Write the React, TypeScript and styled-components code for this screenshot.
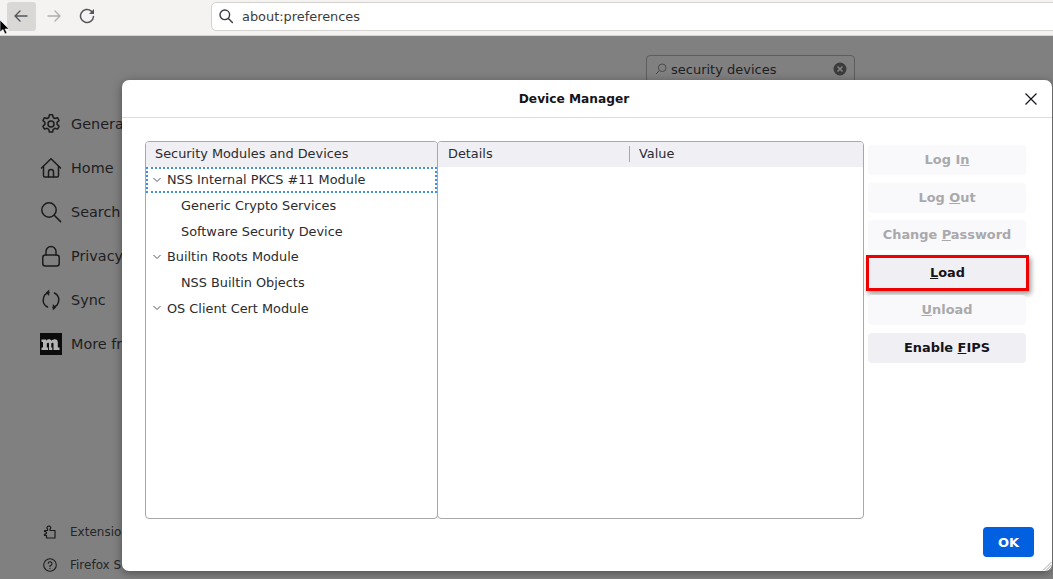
import styled, { createGlobalStyle } from 'styled-components';

const GlobalStyle = createGlobalStyle`
  html, body {
    margin: 0;
    padding: 0;
    width: 100%;
    height: 100%;
    overflow: hidden;
    background: #808080;
    font-family: 'DejaVu Sans', sans-serif;
  }
  #root {
    height: 100%;
  }
  svg {
    flex: 0 0 auto;
  }
`;

const Page = styled.div`
  position: relative;
  display: flex;
  flex-direction: column;
  width: 1053px;
  height: 579px;
  overflow: hidden;
`;

const Toolbar = styled.div`
  display: flex;
  align-items: center;
  flex: 0 0 36px;
  box-sizing: border-box;
  padding: 0 0 3px 7px;
  background: #f4f3f1;
  border-bottom: 1px solid #d4d2ce;
`;

const NavButton = styled.div<{ $hover?: boolean; $disabled?: boolean }>`
  display: flex;
  align-items: center;
  justify-content: center;
  width: 29px;
  height: 29px;
  margin-right: 4px;
  padding-right: 1px;
  box-sizing: border-box;
  border-radius: 3px;
  background: ${(p) => (p.$hover ? '#d9d8d6' : 'transparent')};
  color: ${(p) => (p.$disabled ? '#b0afad' : '#55555a')};
`;

const UrlBar = styled.div`
  display: flex;
  align-items: center;
  flex: 1;
  height: 29px;
  box-sizing: border-box;
  margin-left: 105px;
  margin-right: -8px;
  padding-left: 6px;
  background: #fff;
  border: 1px solid #d5d3cf;
  border-radius: 5px;
  color: #3c3c40;
  font-size: 12.9px;
`;

const UrlText = styled.span`
  margin-left: 8px;
`;

const Content = styled.div`
  position: relative;
  flex: 1;
  display: flex;
  background: #808080;
`;

const Sidebar = styled.nav`
  display: flex;
  flex-direction: column;
  width: 122px;
  flex: 0 0 122px;
  padding: 66px 0 0 40px;
  box-sizing: border-box;
  overflow: hidden;
  white-space: nowrap;
`;

const NavItem = styled.div`
  display: flex;
  align-items: center;
  gap: 9px;
  height: 44px;
  color: #1e1e20;
  font-size: 14.4px;
`;

const SideFooter = styled.div`
  margin-top: auto;
  margin-bottom: -2px;
`;

const FooterItem = styled.div`
  display: flex;
  align-items: center;
  gap: 13px;
  height: 33px;
  margin-left: 3px;
  color: #262628;
  font-size: 12px;
`;

const SearchArea = styled.div`
  flex: 1;
  display: flex;
  justify-content: flex-end;
  align-items: flex-start;
  padding: 19px 198px 0 0;
`;

const SearchBox = styled.div`
  display: flex;
  align-items: center;
  width: 209px;
  height: 28px;
  box-sizing: border-box;
  padding: 0 7px 0 8px;
  gap: 4px;
  border: 1px solid #5e5e5e;
  border-radius: 4px;
  color: #1e1e20;
  font-size: 13px;
`;

const SearchValue = styled.span`
  flex: 1;
`;

const Dialog = styled.div`
  position: absolute;
  left: 122px;
  top: 44px;
  width: 930px;
  height: 491px;
  display: flex;
  flex-direction: column;
  background: #fff;
  border-radius: 7px;
  box-shadow: 0 2px 10px rgba(0, 0, 0, 0.4);
`;

const DialogHeader = styled.div`
  display: flex;
  align-items: center;
  flex: 0 0 38px;
  box-sizing: border-box;
  padding: 0 14px 0 0;
  border-bottom: 1px solid #dcdcdc;
`;

const DialogTitle = styled.div`
  flex: 1;
  padding-left: 2px;
  text-align: center;
  color: #15141a;
  font-size: 12.2px;
  font-weight: 700;
`;

const CloseIcon = styled.div`
  display: flex;
  color: #15141a;
`;

const DialogBody = styled.div`
  flex: 1;
  display: flex;
  padding: 23px 26px 0 23px;
`;

const TreePanel = styled.div`
  width: 293px;
  height: 378px;
  box-sizing: border-box;
  border: 1px solid #a8a8ac;
  border-radius: 4px;
  overflow: hidden;
  color: #2b2b2f;
  font-size: 12.87px;
`;

const DetailsPanel = styled(TreePanel)`
  width: 427px;
  margin-left: -1px;
`;

const ColumnHeader = styled.div`
  display: flex;
  align-items: center;
  height: 25px;
  padding-bottom: 1px;
  box-sizing: border-box;
  background: #f0f0f4;
`;

const HeaderCell = styled.div<{ $width?: number }>`
  width: ${(p) => (p.$width ? `${p.$width}px` : 'auto')};
  flex: ${(p) => (p.$width ? '0 0 auto' : '1')};
  box-sizing: border-box;
  padding-left: ${(p) => (p.$width ? 10 : 9)}px;
  line-height: 16px;
  border-right: ${(p) => (p.$width ? '1px solid #a8a8ac' : 'none')};
`;

const TreeRow = styled.div<{ $child?: boolean; $focused?: boolean }>`
  display: flex;
  align-items: center;
  height: 25.7px;
  box-sizing: border-box;
  padding-left: ${(p) => (p.$child ? 35 : 7)}px;
  gap: 6px;
  outline: ${(p) => (p.$focused ? '2px dotted #3d8fe8' : 'none')};
  outline-offset: -2px;
`;

const ActionColumn = styled.div`
  display: flex;
  flex-direction: column;
  gap: 7.6px;
  width: 158px;
  margin: 4px 0 0 4px;
`;

const ActionButton = styled.div<{ $disabled?: boolean; $highlight?: boolean }>`
  display: flex;
  align-items: center;
  justify-content: center;
  height: 30px;
  padding-bottom: 1px;
  box-sizing: border-box;
  border-radius: 4px;
  background: ${(p) => (p.$disabled ? '#f9f9fb' : '#f0f0f4')};
  color: ${(p) => (p.$disabled ? '#a9a9ac' : '#15141a')};
  font-size: 12.9px;
  font-weight: 700;
  ${(p) =>
    p.$highlight &&
    `
    margin-left: 1px;
    border-radius: 0;
    outline: 3px solid #ee0000;
    outline-offset: 0;
    box-shadow: 2px 3px 5px 3px rgba(0, 0, 0, 0.4);
  `}
`;

const DialogFooter = styled.div`
  display: flex;
  justify-content: flex-end;
  padding: 0 18px 14px 0;
`;

const OkButton = styled.div`
  display: flex;
  align-items: center;
  justify-content: center;
  width: 51px;
  height: 30px;
  border-radius: 4px;
  background: #0060df;
  color: #fff;
  font-size: 13px;
  font-weight: 700;
`;

const ResizeGrip = styled.svg`
  position: absolute;
  right: 0;
  bottom: 0;
`;

const Cursor = styled.svg`
  position: absolute;
  left: 0;
  top: 20px;
`;

const ChevronIcon = () => (
  <svg width="8" height="6" viewBox="0 0 8 6" fill="none" stroke="#55555a" strokeWidth="1">
    <path d="M.5 1 4 4.500 7.500 1" />
  </svg>
);

const moduleRows = [
  { label: 'NSS Internal PKCS #11 Module', focused: true },
  { label: 'Generic Crypto Services', child: true },
  { label: 'Software Security Device', child: true },
  { label: 'Builtin Roots Module' },
  { label: 'NSS Builtin Objects', child: true },
  { label: 'OS Client Cert Module' },
];

const iconProps = {
  width: 22,
  height: 22,
  viewBox: '0 0 22 22',
  fill: 'none',
  stroke: '#1b1b1d',
  strokeWidth: 1.5,
  strokeLinecap: 'round' as const,
  strokeLinejoin: 'round' as const,
};

function App() {
  return (
    <Page>
      <GlobalStyle />
      <Toolbar>
        <NavButton $hover>
          <svg width="16" height="16" viewBox="0 0 16 16" fill="none" stroke="currentColor" strokeWidth="1.4" strokeLinecap="round" strokeLinejoin="round">
            <path d="M14 8H2M7 3 2 8l5 5" />
          </svg>
        </NavButton>
        <NavButton $disabled>
          <svg width="16" height="16" viewBox="0 0 16 16" fill="none" stroke="currentColor" strokeWidth="1.4" strokeLinecap="round" strokeLinejoin="round">
            <path d="M2 8h12M9 3l5 5-5 5" />
          </svg>
        </NavButton>
        <NavButton>
          <svg width="16" height="16" viewBox="0 0 16 16" fill="none" stroke="currentColor" strokeWidth="1.5" strokeLinecap="round" strokeLinejoin="round">
            <path d="M14.500 8.500A6.500 6.500 0 1 1 12.300 3.100L14 5" />
            <path d="M15 1v5H10z" fill="currentColor" stroke="none" />
          </svg>
        </NavButton>
        <UrlBar>
          <svg width="16" height="16" viewBox="0 0 16 16" fill="none" stroke="#3c3c40" strokeWidth="1.4" strokeLinecap="round">
            <circle cx="6.800" cy="6.800" r="4.800" />
            <path d="m10.400 10.400 4 4" />
          </svg>
          <UrlText>about:preferences</UrlText>
        </UrlBar>
      </Toolbar>

      <Content>
        <Sidebar>
          <NavItem>
            <svg {...iconProps}>
              <circle cx="11" cy="11" r="3" />
              <path d="M9.400 1.800h3.200l.6 2.700 1.700 1 2.600-.8 1.600 2.800-2 1.900v2l2 1.900-1.600 2.800-2.600-.8-1.700 1-.6 2.700H9.400l-.6-2.700-1.700-1-2.600.8-1.600-2.800 2-1.900v-2l-2-1.900 1.600-2.800 2.600.8 1.700-1z" />
            </svg>
            General
          </NavItem>
          <NavItem>
            <svg {...iconProps}>
              <path d="M1.500 11 11 1.800l9.500 9.200" />
              <path d="M3.500 9.500v9a1.500 1.500 0 0 0 1.500 1.500h12a1.500 1.500 0 0 0 1.500-1.500v-9" />
              <path d="M8.500 20v-5a2.500 2.500 0 0 1 5 0v5" />
            </svg>
            Home
          </NavItem>
          <NavItem>
            <svg {...iconProps}>
              <circle cx="9" cy="9" r="7.200" />
              <path d="m14.200 14.200 6.400 6.400" />
            </svg>
            Search
          </NavItem>
          <NavItem>
            <svg {...iconProps}>
              <rect x="2.800" y="10" width="16.400" height="11" rx="2.500" />
              <path d="M6 10V6.500a5 5 0 0 1 10 0V10" />
            </svg>
            Privacy &amp; Security
          </NavItem>
          <NavItem>
            <svg {...iconProps}>
              <path d="M9 3.600A7.700 7.700 0 0 0 7.600 18" />
              <path d="M13 18.400A7.700 7.700 0 0 0 14.400 4" />
              <path d="M9.200.500v6.400L5.800 3.700z" fill="#1b1b1d" stroke="none" />
              <path d="M12.800 21.500v-6.400l3.400 3.200z" fill="#1b1b1d" stroke="none" />
            </svg>
            Sync
          </NavItem>
          <NavItem>
            <svg width="22" height="22" viewBox="0 0 22 22">
              <rect width="22" height="22" fill="#0c0c0d" />
              <path d="M1.500 6.500H6v1.200c1-1 2-1.400 3-1.400 1.200 0 2 .5 2.500 1.500 1-1 2.200-1.500 3.300-1.500 1.900 0 3 1.100 3 3.200v5h1.700V17h-6v-6c0-.9-.3-1.300-.9-1.300-.5 0-1 .3-1.300.7v4.100h1V17H9v-6c0-.9-.3-1.300-.9-1.300-.5 0-1 .3-1.300.7v4.100h1.300V17H1.500v-2.500H3V9H1.500z" fill="#b4b4b4" />
            </svg>
            More from Mozilla
          </NavItem>
          <SideFooter>
            <FooterItem>
              <svg width="14" height="14" viewBox="0 0 14 14" fill="none" stroke="#1b1b1d" strokeWidth="1.2" strokeLinejoin="round">
                <path d="M1.500 5.500h3V4a1.600 1.600 0 0 1 1-2.800A1.600 1.600 0 0 1 7 4v1.500h5V13H3.500v-2.500h-2V9a1.500 1.500 0 0 0 2-1.200 1.500 1.500 0 0 0-2-1.300z" />
              </svg>
              Extensions &amp; Themes
            </FooterItem>
            <FooterItem>
              <svg width="14" height="14" viewBox="0 0 14 14" fill="none" stroke="#1b1b1d" strokeWidth="1.1" strokeLinecap="round">
                <circle cx="7" cy="7" r="6.300" />
                <path d="M5.200 5.400A1.900 1.900 0 1 1 7 7.500v.9" />
                <path d="M7 10.300v.2" />
              </svg>
              Firefox Support
            </FooterItem>
          </SideFooter>
        </Sidebar>

        <SearchArea>
          <SearchBox>
            <svg width="12" height="12" viewBox="0 0 12 12" fill="none" stroke="#4a4a4c" strokeWidth="1">
              <circle cx="7.200" cy="4.800" r="3.800" />
              <path d="M4.400 7.600 1 11" />
            </svg>
            <SearchValue>security devices</SearchValue>
            <svg width="14" height="14" viewBox="0 0 14 14">
              <circle cx="7" cy="7" r="6.500" fill="#3b3b3d" />
              <path d="m4.500 4.500 5 5m0-5-5 5" stroke="#808080" strokeWidth="1.600" />
            </svg>
          </SearchBox>
        </SearchArea>

        <Dialog>
          <DialogHeader>
            <DialogTitle>Device Manager</DialogTitle>
            <CloseIcon>
              <svg width="14" height="14" viewBox="0 0 14 14" fill="none" stroke="currentColor" strokeWidth="1.200">
                <path d="m1.500 1.500 11 11m0-11-11 11" />
              </svg>
            </CloseIcon>
          </DialogHeader>
          <DialogBody>
            <TreePanel>
              <ColumnHeader>
                <HeaderCell>Security Modules and Devices</HeaderCell>
              </ColumnHeader>
              {moduleRows.map((row) => (
                <TreeRow key={row.label} $child={row.child} $focused={row.focused}>
                  {!row.child && <ChevronIcon />}
                  {row.label}
                </TreeRow>
              ))}
            </TreePanel>
            <DetailsPanel>
              <ColumnHeader>
                <HeaderCell $width={192}>Details</HeaderCell>
                <HeaderCell>Value</HeaderCell>
              </ColumnHeader>
            </DetailsPanel>
            <ActionColumn>
              <ActionButton $disabled>
                <span>Log I<u>n</u></span>
              </ActionButton>
              <ActionButton $disabled>
                <span>Log <u>O</u>ut</span>
              </ActionButton>
              <ActionButton $disabled>
                <span>Change <u>P</u>assword</span>
              </ActionButton>
              <ActionButton $highlight>
                <span><u>L</u>oad</span>
              </ActionButton>
              <ActionButton $disabled>
                <span><u>U</u>nload</span>
              </ActionButton>
              <ActionButton>
                <span>Enable <u>F</u>IPS</span>
              </ActionButton>
            </ActionColumn>
          </DialogBody>
          <DialogFooter>
            <OkButton>OK</OkButton>
          </DialogFooter>
          <ResizeGrip width="10" height="10" viewBox="0 0 10 10" stroke="#a8a8a8" strokeWidth="1">
            <path d="M9.500 1 1 9.500M9.500 4 4 9.500M9.500 7 7 9.500" />
          </ResizeGrip>
        </Dialog>
      </Content>

      <Cursor width="10" height="16" viewBox="0 0 10 16">
        <path d="M0 0v12l3-2.500L5 14l2-1-2-4h4z" fill="#000" stroke="#fff" strokeWidth="0.600" />
      </Cursor>
    </Page>
  );
}

export default App;
